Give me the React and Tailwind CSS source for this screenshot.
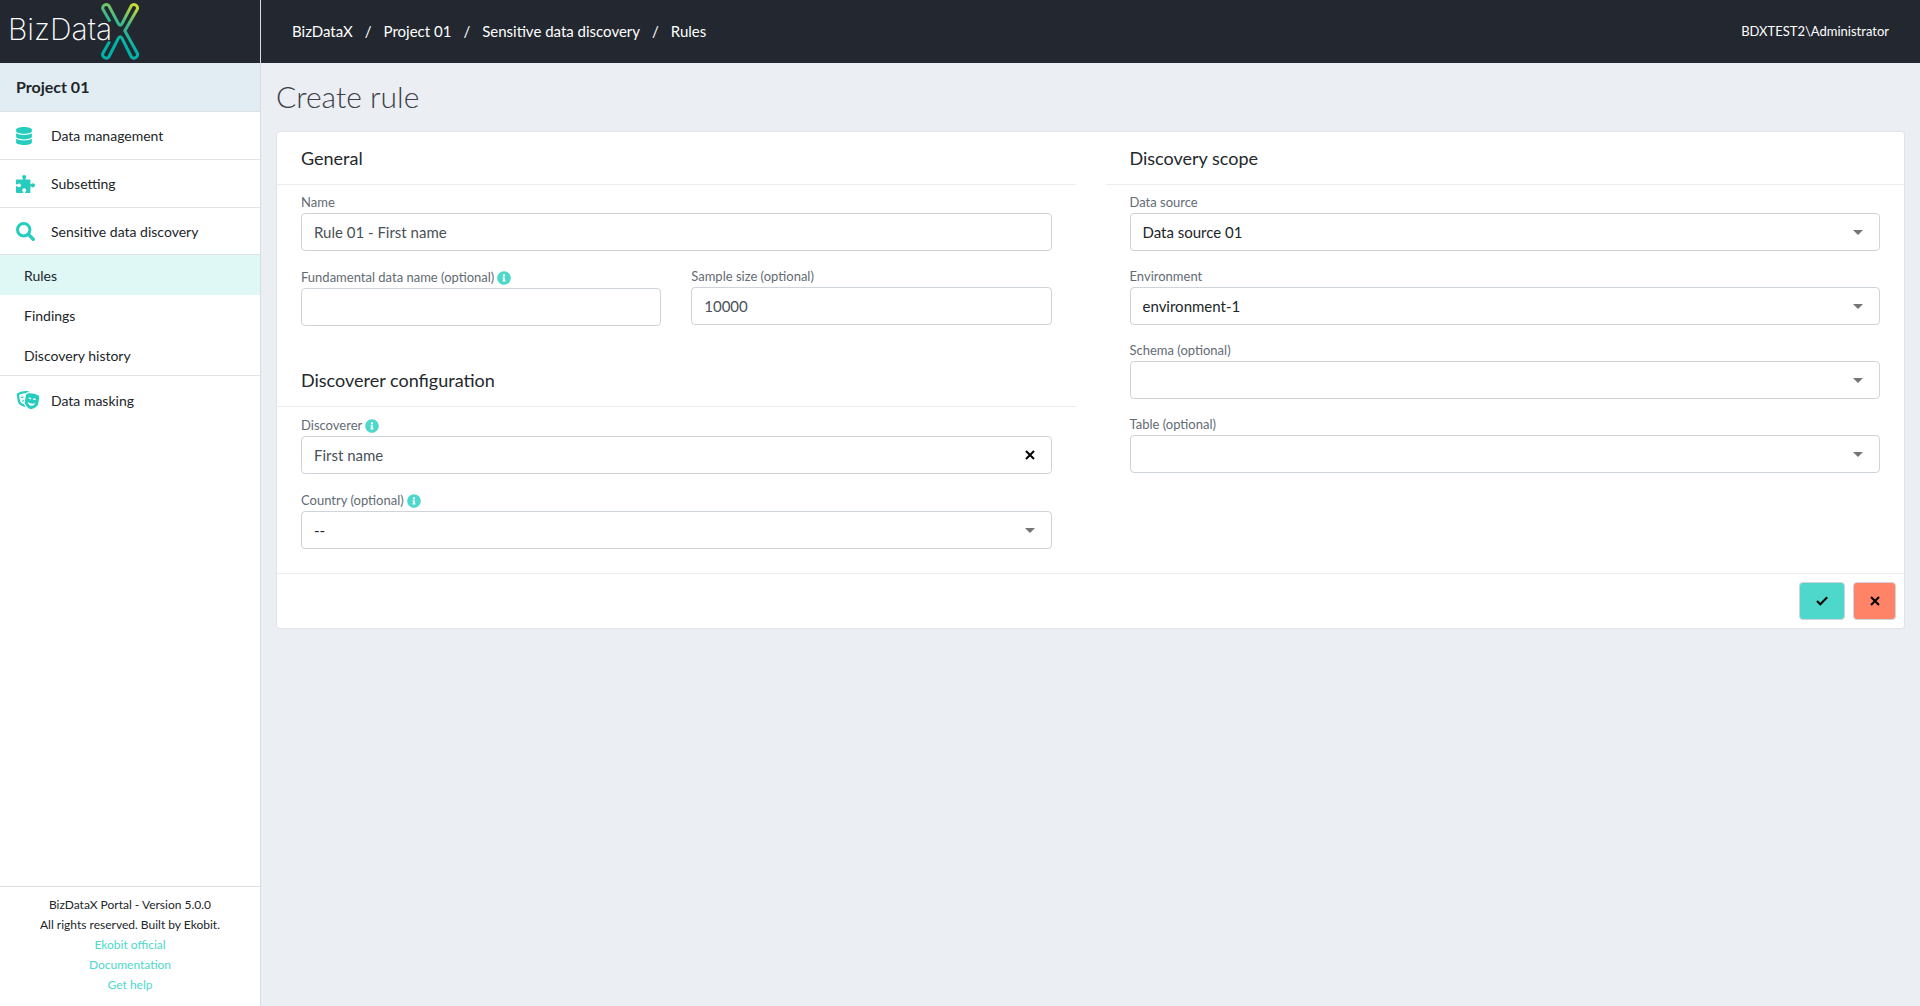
import { useState } from "react";
import { FaDatabase, FaInfoCircle, FaTheaterMasks } from "react-icons/fa";

const subItems = ['Rules', 'Findings', 'Discovery history'];
const crumbs = ['BizDataX', 'Project 01', 'Sensitive data discovery', 'Rules'];
const footerLinks = ['Ekobit official', 'Documentation', 'Get help'];

function Logo() {
	return <a href="#" aria-label="BizDataX" className="flex items-center h-[61px] pl-2 text-white">
		<span className="w-[92px] pb-1 whitespace-nowrap text-[30px] leading-8 font-extralight font-['Inter',sans-serif]">BizData</span>
		<svg width="40" height="60" viewBox="100 1 40 60" fill="none" className="shrink-0">
			<defs>
				<linearGradient id="logoX" x1="137" y1="4" x2="112" y2="50" gradientUnits="userSpaceOnUse">
					<stop offset="0" stopColor="#d3e029" />
					<stop offset="0.45" stopColor="#3fb98a" />
					<stop offset="0.8" stopColor="#00b3a6" />
				</linearGradient>
			</defs>
			<path
				d="M110 21.5 L102.8 9 A3.6 3.6 0 0 1 108.8 5.6 L118 23 Q120.2 27.5 122.4 23 L131.4 5.6 A3.6 3.6 0 0 1 137.4 9 L124.8 30.8 L137.4 53.4 A3.6 3.6 0 0 1 131.4 57 L122.4 39 Q120.2 34.5 118 39 L108.8 57 A3.6 3.6 0 0 1 102.8 53.4 L109.6 41.5"
				stroke="url(#logoX)"
				strokeWidth="3"
			/>
		</svg>
	</a>
}

function CrossIcon() {
	return <svg width="10" height="10" viewBox="0 0 10 10" fill="none" stroke="black" strokeWidth="2">
		<path d="M1 1 L9 9 M9 1 L1 9" />
	</svg>
}

function CheckIcon() {
	return <svg width="12" height="10" viewBox="0 0 12 10" fill="none" stroke="black" strokeWidth="2">
		<path d="M1 5 L4.3 8.3 L11.2 1.2" />
	</svg>
}

function SearchIcon() {
	return <svg width="19" height="19" viewBox="0 0 19 19" fill="none" stroke="currentColor">
		<circle cx="7.7" cy="7.7" r="6.2" strokeWidth="3" />
		<path d="M12.4 12.4 L17.2 17.2" strokeWidth="3.4" strokeLinecap="round" />
	</svg>
}

function PuzzleIcon() {
	return <svg width="19" height="18" viewBox="0 0 19 18" fill="currentColor">
		<rect y="4.6" width="14.4" height="13.4" rx="0.8" />
		<circle cx="8.2" cy="2.1" r="2.1" />
		<rect x="7.2" y="3" width="2" height="2.5" />
		<circle cx="16.9" cy="10.3" r="2.1" />
		<rect x="13.5" y="9.3" width="2.5" height="2" />
		<g fill="white">
			<circle cx="3.1" cy="10.3" r="1.9" />
			<rect y="9.4" width="2.5" height="1.8" />
			<circle cx="8.2" cy="15.2" r="1.9" />
			<rect x="7.3" y="16" width="1.8" height="2" />
		</g>
	</svg>
}

function MenuItem({ icon, label, className }) {
	return <a href="#" className={`flex items-center pl-4 text-[14px] ${className}`}>
		<span className="w-[35px] text-[#26cdbe] text-[18px]">{icon}</span>
		{label}
	</a>
}

function Label({ id, text, info }) {
	return <div className={`flex items-center gap-[3px] text-[13px] text-[#636b74] ${info ? 'h-[21px]' : 'h-5'}`}>
		<label htmlFor={id}>{text}</label>
		{info && <FaInfoCircle className="text-[14px] text-[#4dd8cb]" />}
	</div>
}

function TextField({ id, label, info, value, clearable }) {
	const [text, setText] = useState(value);

	return <div className="mb-4">
		<Label id={id} text={label} info={info} />
		<div className="relative">
			<input
				id={id}
				type="text"
				value={text}
				onChange={(event) => setText(event.target.value)}
				className="block w-full h-[38px] px-3 text-[15px] text-[#495057] bg-white border border-[#ced4da] rounded focus:outline-none"
			/>
			{clearable &&
				<button
					type="button"
					aria-label="Clear"
					onClick={() => setText('')}
					className="absolute inset-y-0 right-[17px] cursor-pointer"
				>
					<CrossIcon />
				</button>
			}
		</div>
	</div>
}

function SelectField({ id, label, info, value }) {
	return <div className="mb-4">
		<Label id={id} text={label} info={info} />
		<div className="relative">
			<select
				id={id}
				defaultValue={value}
				className="block appearance-none w-full h-[38px] px-3 text-[15px] text-[#212529] bg-white border border-[#ced4da] rounded focus:outline-none"
			>
				<option value={value}>{value}</option>
			</select>
			<svg width="10" height="5" viewBox="0 0 10 5" className="absolute right-[17px] top-[17px] pointer-events-none">
				<path d="M0 0 H10 L5 5 Z" fill="#757575" />
			</svg>
		</div>
	</div>
}

function Section({ title, className, children }) {
	return <section className={className}>
		<h2 className="flex items-center h-[53px] px-6 text-[18px] text-[#23282c] border-b border-[#ebedf0]">{title}</h2>
		<div className="px-6 pt-2">{children}</div>
	</section>
}

export default function App() {
	return <div className="flex min-h-screen bg-[#ebeef3] text-[#212529] font-['Lato',Carlito,sans-serif]">
		<aside className="flex flex-col w-[261px] shrink-0 bg-white border-r border-[#d8dbe0]">
			<div className="h-[63px] bg-[#23272f]">
				<Logo />
			</div>
			<div className="flex items-center h-[49px] pl-4 text-[16px] font-bold bg-[#e1edf2] border-b border-[#dfe2e5]">Project 01</div>
			<nav className="flex flex-col">
				<MenuItem icon={<FaDatabase className="w-4" />} label="Data management" className="h-12 border-b border-[#e0e2e4]" />
				<MenuItem icon={<PuzzleIcon />} label="Subsetting" className="h-12 border-b border-[#e0e2e4]" />
				<MenuItem icon={<SearchIcon />} label="Sensitive data discovery" className="h-[46px]" />
				<div className="border-y border-[#e0e2e4]">
					{subItems.map((item, index) =>
						<a
							key={item}
							href="#"
							className={`flex items-center h-10 pl-6 text-[14px] ${index === 0 ? 'bg-[#dff7f5]' : ''}`}
						>
							{item}
						</a>
					)}
				</div>
				<MenuItem icon={<FaTheaterMasks className="w-6" />} label="Data masking" className="h-12" />
			</nav>
			<footer className="flex flex-col items-center mt-auto pt-2 pb-[11px] text-[12px] leading-5 border-t border-[#e0e2e4]">
				<span>BizDataX Portal - Version 5.0.0</span>
				<span>All rights reserved. Built by Ekobit.</span>
				{footerLinks.map((link) => <a key={link} href="#" className="text-[#4dd8cb]">{link}</a>)}
			</footer>
		</aside>

		<div className="flex flex-col grow min-w-0">
			<header className="flex items-center justify-between h-[63px] px-[31px] text-white bg-[#23272f]">
				<nav className="flex gap-3 text-[15px]">
					{crumbs.map((crumb, index) =>
						<span key={crumb} className="flex gap-3">
							{index > 0 && <span>/</span>}
							<a href="#">{crumb}</a>
						</span>
					)}
				</nav>
				<span className="text-[13px]">BDXTEST2\Administrator</span>
			</header>

			<main className="pt-3 px-[15px]">
				<h1 className="h-14 text-[30px] leading-[42px] font-light text-[#3c4045]">Create rule</h1>
				<form className="bg-white border border-[#e0e3e8] rounded" onSubmit={(event) => event.preventDefault()}>
					<div className="grid grid-cols-2 gap-[30px] pb-2">
						<div>
							<Section title="General">
								<TextField id="name" label="Name" value="Rule 01 - First name" />
								<div className="grid grid-cols-2 gap-[30px]">
									<TextField id="fundamental" label="Fundamental data name (optional)" info value="" />
									<TextField id="sample" label="Sample size (optional)" value="10000" />
								</div>
							</Section>
							<Section title="Discoverer configuration" className="mt-3">
								<TextField id="discoverer" label="Discoverer" info value="First name" clearable />
								<SelectField id="country" label="Country (optional)" info value="--" />
							</Section>
						</div>
						<Section title="Discovery scope">
							<SelectField id="source" label="Data source" value="Data source 01" />
							<SelectField id="environment" label="Environment" value="environment-1" />
							<SelectField id="schema" label="Schema (optional)" value="" />
							<SelectField id="table" label="Table (optional)" value="" />
						</Section>
					</div>
					<div className="flex justify-end gap-2 p-2 border-t border-[#ebedf0]">
						<button
							type="submit"
							aria-label="Save"
							className="flex items-center justify-center w-[46px] h-[38px] bg-[#4dd8cb] border border-[#ced4da] rounded cursor-pointer"
						>
							<CheckIcon />
						</button>
						<button
							type="button"
							aria-label="Cancel"
							className="flex items-center justify-center w-[43px] h-[38px] bg-[#ff8366] border border-[#ced4da] rounded cursor-pointer"
						>
							<CrossIcon />
						</button>
					</div>
				</form>
			</main>
		</div>
	</div>
}
